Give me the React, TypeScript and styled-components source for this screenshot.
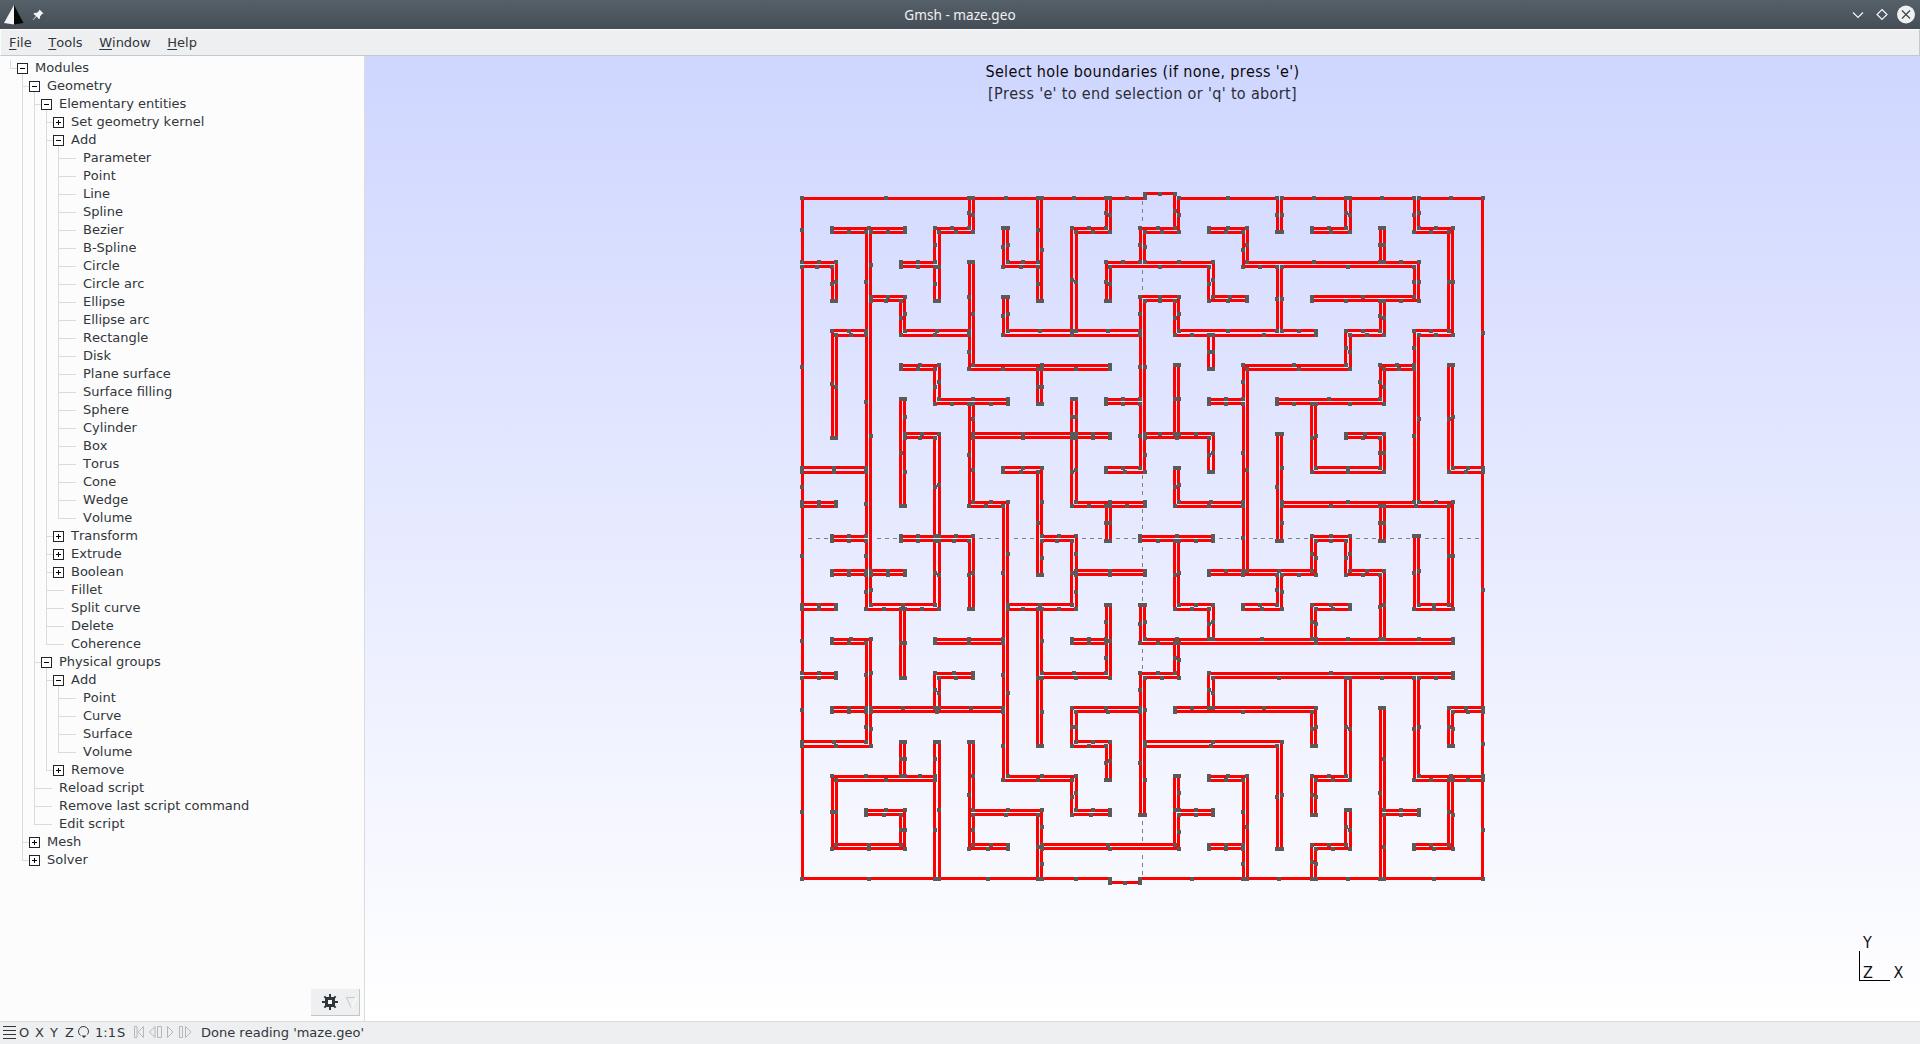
import React from "react";
import styled, { createGlobalStyle } from "styled-components";

const Global = createGlobalStyle`
  html, body, #root { margin: 0; height: 100%; }
  body { overflow: hidden; background: #eeeff1; }
  * { box-sizing: border-box; }
`;

const UI_FONT = `"DejaVu Sans", sans-serif`;
const GL_FONT = `"DejaVu Sans Condensed", "DejaVu Sans", sans-serif`;

const Window = styled.div`
  display: flex;
  flex-direction: column;
  width: 1920px;
  height: 1044px;
  font-family: ${UI_FONT};
  font-size: 13px;
  font-kerning: none;
  color: #31363b;
  background: #eeeff1;
`;

const TitleBar = styled.header`
  display: grid;
  grid-template-columns: 100px 1fr 100px;
  align-items: center;
  height: 29px;
  flex: none;
  color: #eff0f1;
  background: linear-gradient(#566069, #454e57);
  font-family: "Noto Sans", sans-serif;
`;

const TitleLeft = styled.div`
  display: flex;
  align-items: center;
  gap: 8px;
  padding-left: 4px;
`;

const TitleRight = styled.div`
  display: flex;
  justify-content: flex-end;
  padding-right: 4px;
`;

const TitleText = styled.div`
  text-align: center;
  font-size: 13.6px;
  line-height: 29px;
`;

const MenuBar = styled.nav`
  display: flex;
  gap: 16.6px;
  height: 27px;
  flex: none;
  padding: 0 8px;
  border-top: 1px solid #fcfcfc;
  border-left: 1px solid #fcfcfc;
  border-right: 1px solid #c5c8cb;
  border-bottom: 1px solid #c5c8cb;
  line-height: 26px;
`;

const Mnemonic = styled.span`
  text-decoration: underline;
  text-decoration-thickness: 1px;
  text-underline-offset: 2px;
`;

const Main = styled.main`
  display: flex;
  flex: 1;
  min-height: 0;
`;

const Sidebar = styled.aside`
  display: flex;
  flex-direction: column;
  justify-content: space-between;
  width: 365px;
  flex: none;
  padding-top: 3px;
  background: #fcfcfc;
  border-right: 1px solid #d9dbdd;
`;

const Row = styled.div`
  display: flex;
  height: 18px;
  padding-left: 4px;
  line-height: 18px;
  white-space: pre;
`;

const Guides = styled.svg`
  flex: none;
  display: block;
`;

const GearButton = styled.div`
  display: flex;
  align-items: center;
  align-self: flex-end;
  width: 49px;
  height: 27px;
  margin: 0 4px 5px 0;
  background: #eeeff1;
  border-right: 1px solid #c3c5c7;
  border-bottom: 1px solid #c3c5c7;
`;

const Canvas = styled.section`
  position: relative;
  flex: 1;
  background: linear-gradient(#cfd6ff, #ffffff);
`;

const Scene = styled.svg`
  display: block;
`;

const Message = styled.div<{ $top: number; $color: string }>`
  position: absolute;
  top: ${(p) => p.$top}px;
  left: 0;
  right: 0;
  text-align: center;
  font-family: ${GL_FONT};
  font-size: 16px;
  letter-spacing: 0.34px;
  line-height: 20px;
  color: ${(p) => p.$color};
`;

const StatusBar = styled.footer`
  display: flex;
  align-items: center;
  height: 23px;
  flex: none;
  border-top: 1px solid #d9dbdd;
`;

const Slot = styled.span<{ $w: number }>`
  width: ${(p) => p.$w}px;
  flex: none;
  white-space: nowrap;
  line-height: 22px;

  svg {
    display: block;
  }
`;

/* ---------- module tree ---------- */

type Node = { label: string; open?: boolean; shut?: boolean; kids?: Node[] };

const leaf = (label: string): Node => ({ label });
const shut = (label: string): Node => ({ label, shut: true });
const open = (label: string, kids: Node[]): Node => ({ label, open: true, kids });

const TREE: Node = open("Modules", [
  open("Geometry", [
    open("Elementary entities", [
      shut("Set geometry kernel"),
      open(
        "Add",
        [
          "Parameter", "Point", "Line", "Spline", "Bezier", "B-Spline", "Circle", "Circle arc",
          "Ellipse", "Ellipse arc", "Rectangle", "Disk", "Plane surface", "Surface filling",
          "Sphere", "Cylinder", "Box", "Torus", "Cone", "Wedge", "Volume",
        ].map(leaf)
      ),
      shut("Transform"),
      shut("Extrude"),
      shut("Boolean"),
      leaf("Fillet"),
      leaf("Split curve"),
      leaf("Delete"),
      leaf("Coherence"),
    ]),
    open("Physical groups", [
      open("Add", ["Point", "Curve", "Surface", "Volume"].map(leaf)),
      shut("Remove"),
    ]),
    leaf("Reload script"),
    leaf("Remove last script command"),
    leaf("Edit script"),
  ]),
  shut("Mesh"),
  shut("Solver"),
]);

type Flat = { node: Node; depth: number; last: boolean; rails: boolean[] };

const flatten = (node: Node, depth = 0, last = true, rails: boolean[] = []): Flat[] => [
  { node, depth, last, rails },
  ...(node.kids ?? []).flatMap((k, i, all) =>
    flatten(k, depth + 1, i === all.length - 1, [...rails, !last])
  ),
];

const TreeRow = ({ node, depth, last, rails }: Flat) => {
  const w = 31 + depth * 12;
  const x = 6 + depth * 12;
  const box = node.open || node.shut;
  const gray = "#d9dbdd";
  return (
    <Row>
      <Guides width={w} height={18} shapeRendering="crispEdges">
        {rails.map((on, i) => on && <rect key={i} x={6 + i * 12} y={0} width={1} height={18} fill={gray} />)}
        <rect x={x} y={depth ? 0 : 1} width={1} height={last ? (depth ? 10 : 9) : 18} fill={gray} />
        <rect x={x} y={9} width={box ? 7 : 18} height={1} fill={gray} />
        {node.open && <rect x={x + 12} y={15} width={1} height={3} fill={gray} />}
        {box && (
          <>
            <rect x={x + 7.5} y={4.5} width={10} height={10} fill="#fff" stroke="#232629" />
            <rect x={x + 10} y={9} width={5} height={1} fill="#000" />
            {node.shut && <rect x={x + 12} y={7} width={1} height={5} fill="#000" />}
          </>
        )}
      </Guides>
      <span>{node.label}</span>
    </Row>
  );
};

/* ---------- maze geometry ---------- */

type Span = [number, number];
const N = 20;

// Horizontal walls, one list of column spans for each grid line from the top.
const H: Span[][] = [
  [[0, 10], [11, 20]],
  [[1, 3], [4, 5], [8, 9], [10, 11], [12, 13], [15, 16], [18, 19]],
  [[0, 1], [3, 4], [6, 7], [9, 12], [13, 18]],
  [[2, 3], [10, 11], [12, 13], [15, 18]],
  [[1, 2], [3, 5], [6, 10], [11, 15], [16, 17], [18, 19]],
  [[3, 4], [5, 9], [13, 16], [17, 18]],
  [[4, 6], [9, 10], [12, 13], [14, 17]],
  [[3, 4], [5, 9], [10, 12], [16, 17]],
  [[0, 2], [6, 7], [9, 10], [15, 17], [19, 20]],
  [[0, 1], [5, 6], [8, 10], [11, 13], [14, 19]],
  [[1, 2], [3, 5], [7, 8], [10, 12], [15, 16]],
  [[1, 3], [8, 10], [12, 15], [16, 17]],
  [[0, 1], [2, 4], [6, 8], [11, 12], [13, 14], [15, 16], [18, 19]],
  [[1, 2], [4, 6], [8, 9], [10, 19]],
  [[0, 1], [4, 5], [7, 9], [10, 11], [12, 19]],
  [[1, 6], [8, 10], [11, 15], [19, 20]],
  [[0, 2], [8, 9], [10, 14]],
  [[1, 4], [6, 8], [12, 13], [15, 16], [18, 20]],
  [[2, 3], [5, 7], [8, 9], [11, 12], [17, 18]],
  [[1, 3], [5, 6], [7, 11], [12, 13], [15, 16], [18, 19]],
  [[0, 9], [10, 20]],
];

// Vertical walls, one list of row spans for each grid line from the left.
const V: Span[][] = [
  [[0, 20]],
  [[2, 3], [4, 7], [17, 19]],
  [[1, 12], [13, 16]],
  [[3, 4], [6, 9], [12, 14], [16, 17], [18, 19]],
  [[1, 3], [5, 6], [7, 12], [14, 15], [16, 20]],
  [[0, 1], [2, 5], [6, 9], [10, 12], [16, 19]],
  [[1, 2], [3, 4], [9, 17]],
  [[0, 3], [5, 6], [8, 11], [12, 16], [18, 20]],
  [[1, 4], [6, 9], [10, 12], [15, 16], [17, 18]],
  [[0, 1], [2, 3], [9, 10], [12, 14], [16, 17]],
  [[1, 2], [3, 8], [12, 13], [14, 18]],
  [[0, 1], [3, 4], [5, 7], [8, 9], [10, 12], [13, 14], [17, 19]],
  [[2, 3], [4, 5], [7, 8], [12, 13], [14, 15]],
  [[1, 2], [5, 11], [17, 20]],
  [[0, 1], [2, 4], [7, 10], [11, 12], [16, 19]],
  [[6, 8], [10, 11], [12, 13], [15, 16], [17, 18], [19, 20]],
  [[0, 1], [4, 5], [10, 11], [14, 17], [18, 19]],
  [[1, 2], [3, 4], [5, 6], [7, 8], [9, 10], [11, 13], [15, 20]],
  [[0, 1], [2, 3], [4, 9], [10, 12], [14, 17]],
  [[1, 4], [5, 8], [9, 12], [15, 16], [17, 19]],
  [[0, 20]],
];

const PITCH = 34.24;
const HALF = 2.1;
const CANVAS_X = 365;
const CANVAS_Y = 56;
const X0 = 800.1 - CANVAS_X;
const Y0 = 196.09 - CANVAS_Y;

// Each grid line yields two coordinates, the near and far face of its wall.
const face = (origin: number, i: number) => origin + (i >> 1) * PITCH + (i & 1 ? HALF : -HALF);

const SIZE = 2 * N + 1;
const solid = Array.from({ length: SIZE }, () => Array<boolean>(SIZE).fill(false));
H.forEach((spans, r) => spans.forEach(([a, b]) => { for (let i = 2 * a; i <= 2 * b; i++) solid[2 * r][i] = true; }));
V.forEach((spans, c) => spans.forEach(([a, b]) => { for (let i = 2 * a; i <= 2 * b; i++) solid[i][2 * c] = true; }));
const isOpen = (r: number, c: number) => r >= 0 && c >= 0 && r < SIZE && c < SIZE && !solid[r][c];

type Edge = { x1: number; y1: number; x2: number; y2: number };
const edges: Edge[] = [];

const trace = (side: (line: number, pos: number) => number, emit: (line: number, a: number, b: number) => void) => {
  for (let line = 0; line <= SIZE; line++) {
    let start = -1;
    let kind = 0;
    for (let pos = 0; pos <= SIZE; pos++) {
      const s = pos < SIZE ? side(line, pos) : 0;
      if (s !== kind) {
        if (kind) emit(line, start, pos);
        start = pos;
        kind = s;
      }
    }
  }
};

trace(
  (l, p) => Number(isOpen(l, p)) - Number(isOpen(l - 1, p)),
  (l, a, b) => edges.push({ x1: face(X0, a), x2: face(X0, b), y1: face(Y0, l), y2: face(Y0, l) })
);
trace(
  (l, p) => Number(isOpen(p, l)) - Number(isOpen(p, l - 1)),
  (l, a, b) => edges.push({ x1: face(X0, l), x2: face(X0, l), y1: face(Y0, a), y2: face(Y0, b) })
);

const r = Math.round;
const linePath = edges
  .map(({ x1, y1, x2, y2 }) =>
    y1 === y2
      ? `M${r(x1)} ${r(y1 - 1.5)}H${r(x2)}v3H${r(x1)}z`
      : `M${r(x1 - 1.5)} ${r(y1)}V${r(y2)}h3V${r(y1)}z`
  )
  .join("");
const dot = (x: number, y: number) => `M${r(x - 2)} ${r(y - 2)}h4v4h-4z`;
const dotPath = edges
  .map(({ x1, y1, x2, y2 }) => dot(x1, y1) + dot(x2, y2) + dot((x1 + x2) / 2, (y1 + y2) / 2))
  .join("");

// The dashed axes show only where they cross open corridor.
const dash = 4;
let axisPath = "";
const openRuns = (free: (i: number) => boolean, origin: number) => {
  const runs: Span[] = [];
  for (let i = 0; i < SIZE; i++) {
    if (!free(i)) continue;
    const start = i;
    while (i < SIZE && free(i)) i++;
    runs.push([face(origin, start), face(origin, i)]);
  }
  return runs;
};
openRuns((i) => isOpen(N, i), X0).forEach(([a, b]) => {
  for (let x = r(b) - 2 * dash; x > a + 2; x -= 2 * dash) axisPath += `M${x} 482h${dash}v1h${-dash}z`;
});
openRuns((i) => isOpen(i, N), Y0).forEach(([a, b]) => {
  if (a < 482) {
    for (let y = r(a) + dash - 1; y + dash < b; y += 2 * dash) axisPath += `M777 ${y}h1v${dash}h-1z`;
  } else {
    for (let y = r(b) - 2 * dash; y > a; y -= 2 * dash) axisPath += `M777 ${y}h1v${dash}h-1z`;
  }
});

const Maze = () => (
  <Scene width={1555} height={965} shapeRendering="crispEdges">
    <path d={axisPath} fill="#808080" />
    <path d={linePath} fill="#f00" />
    <path d={dotPath} fill="#5a5a5a" />
    <path d="M1494.5 895V924.5H1525" stroke="#000" fill="none" />
    <g fontFamily={GL_FONT} fontSize={16} fill="#111">
      <text x={1498} y={892}>Y</text>
      <text x={1498} y={922}>Z</text>
      <text x={1528.5} y={922}>X</text>
    </g>
  </Scene>
);

const Gear = () => (
  <svg width={49} height={26}>
    <g transform="translate(19 13)" fill="#31363b">
      <rect x={-5} y={-5} width={10} height={10} />
      {[0, 45, 90, 135].map((a) => (
        <rect key={a} x={-1} y={-8} width={2} height={16} transform={`rotate(${a})`} />
      ))}
      <rect x={-2} y={-2} width={4} height={4} fill="#fcfcfc" />
    </g>
    <path d="M45.5 8.5L40.5 18.5" stroke="#fff" />
    <path d="M44 8.5H35.5L40 18.5" fill="none" stroke="#c8cacc" />
  </svg>
);

export default function App() {
  return (
    <Window>
      <Global />
      <TitleBar>
        <TitleLeft>
          <svg width={20} height={21}>
            <path d="M10 1L0 19L10 20.5Z" fill="#f4f4f4" />
            <path d="M10 1L19.5 19L10 20.5Z" fill="#050a05" />
          </svg>
          <svg width={12} height={12}>
            <path d="M7.5 0.5L11.5 4.5L10 5L8 7.5L8 9.5L6.8 10L4.7 7.6L1 11L0.5 11L4 7L1.5 5L2.5 3.8L4.5 4L7 2Z" fill="#f4f4f4" />
          </svg>
        </TitleLeft>
        <TitleText>Gmsh - maze.geo</TitleText>
        <TitleRight>
          <svg width={64} height={20} fill="none" stroke="#f4f4f4">
            <path d="M1 7.5L6 12.5L11 7.5" strokeWidth={1.2} />
            <path d="M30 4.5L35 9.5L30 14.5L25 9.5Z" strokeWidth={1.2} />
            <circle cx={54} cy={9.5} r={9} fill="#eff0f1" stroke="none" />
            <path d="M50 5.5L58 13.5M58 5.5L50 13.5" stroke="#3b434b" strokeWidth={1.2} />
          </svg>
        </TitleRight>
      </TitleBar>
      <MenuBar>
        {["File", "Tools", "Window", "Help"].map((m) => (
          <span key={m}><Mnemonic>{m[0]}</Mnemonic>{m.slice(1)}</span>
        ))}
      </MenuBar>
      <Main>
        <Sidebar>
          <div>
            {flatten(TREE).map((f, i) => (
              <TreeRow key={i} {...f} />
            ))}
          </div>
          <GearButton><Gear /></GearButton>
        </Sidebar>
        <Canvas>
          <Maze />
          <Message $top={6} $color="#0a0a0c">Select hole boundaries (if none, press 'e')</Message>
          <Message $top={28} $color="#2a2c36">[Press 'e' to end selection or 'q' to abort]</Message>
        </Canvas>
      </Main>
      <StatusBar>
        <Slot $w={19}>
          <svg width={19} height={22} shapeRendering="crispEdges">
            {[4, 8, 12, 16].map((y) => <rect key={y} x={3} y={y} width={13} height={1} fill="#31363b" />)}
          </svg>
        </Slot>
        <Slot $w={16}>O</Slot>
        <Slot $w={15}>X</Slot>
        <Slot $w={15}>Y</Slot>
        <Slot $w={13}>Z</Slot>
        <Slot $w={17}>
          <svg width={14} height={22} fill="none" stroke="#31363b">
            <path d="M2.5 13.5A5 5 0 1 1 9.5 12.5" />
            <path d="M3.5 13.5H8.5L6 16Z" fill="#31363b" stroke="none" />
          </svg>
        </Slot>
        <Slot $w={22}>1:1</Slot>
        <Slot $w={17}>S</Slot>
        <Slot $w={67}>
          <svg width={60} height={22} fill="none" stroke="#b4b7ba">
            <path d="M.5 4.5h2.5v11h-2.5zM9.5 4.5v11L4 10z" />
            <path d="M21 4.5v11L15.5 10zM23.5 4.5h4v11h-4z" />
            <path d="M33.5 4.5v11L39 10z" />
            <path d="M45.5 4.5h3v11h-3zM51.5 4.5v11L57 10z" />
          </svg>
        </Slot>
        <Slot $w={200}>Done reading 'maze.geo'</Slot>
      </StatusBar>
    </Window>
  );
}
